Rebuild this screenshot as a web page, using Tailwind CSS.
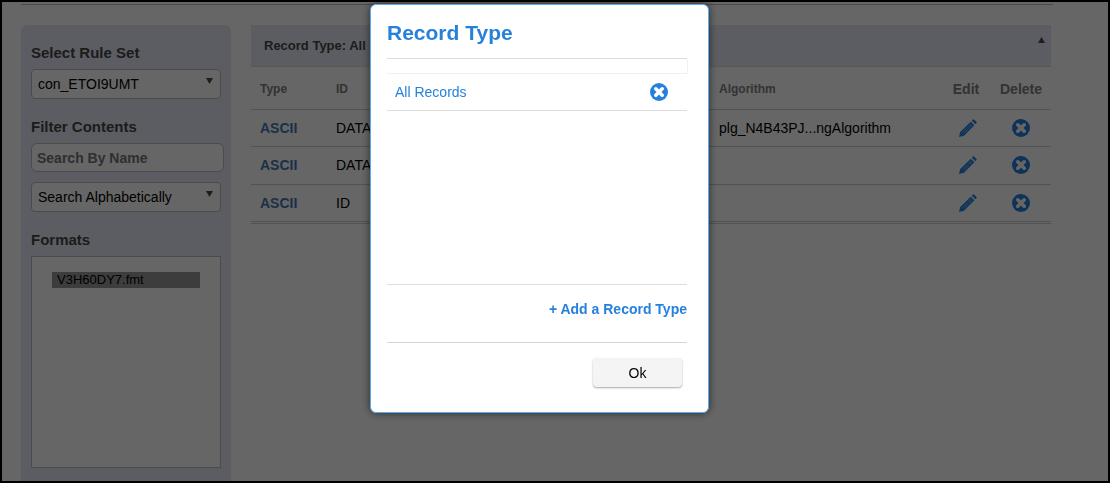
<!DOCTYPE html>
<html lang="en">
<head>
<meta charset="utf-8">
<meta name="viewport" content="width=device-width, initial-scale=1">
<title>Record Type</title>
<script src="https://cdn.jsdelivr.net/npm/@tailwindcss/browser@4"></script>
</head>
<body class="bg-white font-['Liberation_Sans',Arial,sans-serif] text-sm text-black">
<svg class="hidden" aria-hidden="true">
  <symbol id="remove" viewBox="0 0 18 18">
    <circle cx="9" cy="9" r="9" fill="currentColor"/>
    <path d="M5.8 5.8l6.4 6.4M12.2 5.8l-6.4 6.4" stroke="#fff" stroke-width="3.6" stroke-linecap="round"/>
  </symbol>
  <symbol id="pencil" viewBox="0 0 18 18">
    <path d="M0 18l1.2-5L11.8 2.7l3.6 3.6L5 16.8z" fill="currentColor"/>
    <path d="M12.8 1.7L14 .5Q14.5 0 15 .5l2.5 2.5q.5.5 0 1l-1.2 1.3z" fill="currentColor"/>
    <path d="M3.6 13.4l8.6-8.6M4.8 14.4l8.4-8.4" stroke="#fff" stroke-width=".6" stroke-dasharray="1 .8"/>
  </symbol>
</svg>

<div class="flex min-h-screen flex-col pr-4 pl-[21px]">
  <header class="h-[5px] w-full max-w-[1032px] shrink-0 border-b border-[#bbb]"></header>
  <div class="mt-5 flex w-full max-w-[1030px] grow gap-5">
    <aside class="w-[210px] shrink-0 rounded-t-md bg-[#e6e9f4] px-[10px] pt-[18px] pb-3 text-[#464646]">
      <label for="ruleset" class="block text-[15px] leading-5 font-bold">Select Rule Set</label>
      <div class="relative mt-[6px]">
        <select id="ruleset" class="h-[30px] w-full appearance-none rounded border border-[#bbb] bg-white px-[6px] text-sm text-black"><option>con_ETOI9UMT</option></select>
        <svg class="pointer-events-none absolute top-[9px] right-2 h-[6px] w-[7px] fill-[#554848]" viewBox="0 0 7 6"><path d="M0 0h7L3.5 6z"/></svg>
      </div>
      <label for="name" class="mt-[18px] block text-[15px] leading-5 font-bold">Filter Contents</label>
      <input id="name" type="text" placeholder="Search By Name" class="mt-[6px] -mr-[3px] block h-[29px] w-[calc(100%+3px)] rounded-md border border-[#bbb] bg-white px-[5px] text-sm font-bold placeholder:text-[#757575]">
      <div class="relative mt-[10px]">
        <select aria-label="Search Alphabetically" class="h-[30px] w-full appearance-none rounded border border-[#bbb] bg-white px-[6px] text-sm text-black"><option>Search Alphabetically</option></select>
        <svg class="pointer-events-none absolute top-[9px] right-2 h-[6px] w-[7px] fill-[#554848]" viewBox="0 0 7 6"><path d="M0 0h7L3.5 6z"/></svg>
      </div>
      <h2 class="mt-[18px] text-[15px] leading-5 font-bold">Formats</h2>
      <div class="mt-[6px] h-[212px] border border-[#bbb] bg-white px-5 py-[15px]">
        <ul><li class="bg-[#999] pl-[5px] text-[13px] leading-4 text-black">V3H60DY7.fmt</li></ul>
      </div>
    </aside>

    <main class="min-w-0 flex-1">
      <div class="flex h-[42px] items-center justify-between border-b border-[#ddd] bg-[#e6e9f4] pr-[6px] pl-[13px]">
        <h2 class="pt-[2px] text-[13px] font-bold text-[#464646]">Record Type: All Records</h2>
        <button type="button" aria-label="Collapse" class="self-start pt-3"><svg class="block h-[6px] w-[7px] fill-[#554848]" viewBox="0 0 7 6"><path d="M0 6h7L3.5 0z"/></svg></button>
      </div>
      <div class="border-b border-[#ccc] pb-px">
      <table class="w-full table-fixed border-collapse text-left">
        <colgroup><col class="w-[76px]"><col><col class="w-[231px]"><col class="w-[50px]"><col class="w-[60px]"></colgroup>
        <thead class="text-[#808080]">
          <tr class="h-[42px] border-b border-[#ccc]">
            <th class="pt-[3px] pl-[9px] text-xs">Type</th><th class="pt-[3px] pl-[9px] text-xs">ID</th><th class="pt-[3px] pl-[9px] text-xs">Algorithm</th><th class="pt-[3px] text-center text-sm">Edit</th><th class="pt-[3px] text-center text-sm">Delete</th>
          </tr>
        </thead>
        <tbody>
          <tr class="h-[37px] border-b border-[#ccc]">
            <td class="pl-[9px]"><a href="#" class="font-bold text-[#4479b4]">ASCII</a></td><td class="pl-[9px]">DATA_</td><td class="pl-[9px]">plg_N4B43PJ...ngAlgorithm</td>
            <td><button type="button" aria-label="Edit" class="ml-[18px] block text-[#2681dd]"><svg class="size-[18px]"><use href="#pencil"/></svg></button></td>
            <td><button type="button" aria-label="Delete" class="mx-auto block text-[#2681dd]"><svg class="size-[18px]"><use href="#remove"/></svg></button></td>
          </tr>
          <tr class="h-[38px] border-b border-[#ccc]">
            <td class="pl-[9px]"><a href="#" class="font-bold text-[#4479b4]">ASCII</a></td><td class="pl-[9px]">DATA_</td><td></td>
            <td><button type="button" aria-label="Edit" class="ml-[18px] block text-[#2681dd]"><svg class="size-[18px]"><use href="#pencil"/></svg></button></td>
            <td><button type="button" aria-label="Delete" class="mx-auto block text-[#2681dd]"><svg class="size-[18px]"><use href="#remove"/></svg></button></td>
          </tr>
          <tr class="h-[37px] border-b border-[#ccc]">
            <td class="pl-[9px]"><a href="#" class="font-bold text-[#4479b4]">ASCII</a></td><td class="pl-[9px]">ID</td><td></td>
            <td><button type="button" aria-label="Edit" class="ml-[18px] block text-[#2681dd]"><svg class="size-[18px]"><use href="#pencil"/></svg></button></td>
            <td><button type="button" aria-label="Delete" class="mx-auto block text-[#2681dd]"><svg class="size-[18px]"><use href="#remove"/></svg></button></td>
          </tr>
        </tbody>
      </table>
      </div>
    </main>
  </div>
</div>

<div class="fixed inset-0 flex items-start justify-center border-2 border-black bg-black/60 pt-[2px] pr-[31px]">
  <section role="dialog" aria-modal="true" aria-labelledby="dialog-title" class="w-[339px] rounded-md border border-[#5aaaf5] bg-white pr-[21px] pb-[25px] pl-4 text-[#2681dd] shadow-[0_0_8px_rgba(0,0,0,0.6)]">
    <h1 id="dialog-title" class="border-b border-[#ddd] pt-[15px] pb-3 text-[21px] leading-[26px] font-bold">Record Type</h1>
    <div class="-mr-px h-[15px] border-r border-b border-[#f0f0f0]"></div>
    <div class="h-[211px] border-b border-[#ddd]">
      <div class="flex h-[37px] items-center justify-between border-b border-[#ddd] pr-[19px] pl-2">
        <a href="#">All Records</a>
        <button type="button" aria-label="Remove All Records"><svg class="block size-[18px]"><use href="#remove"/></svg></button>
      </div>
    </div>
    <div class="flex h-[58px] justify-end border-b border-[#d4d4d4] pt-[14px]">
      <a href="#" class="leading-5 font-bold">+ Add a Record Type</a>
    </div>
    <div class="flex justify-end pt-[15px] pr-[5px]">
      <button type="button" class="h-[29px] w-[89px] rounded bg-[#f4f4f4] text-sm text-black shadow-[0_1px_2px_rgba(0,0,0,0.35)]">Ok</button>
    </div>
  </section>
</div>
</body>
</html>
